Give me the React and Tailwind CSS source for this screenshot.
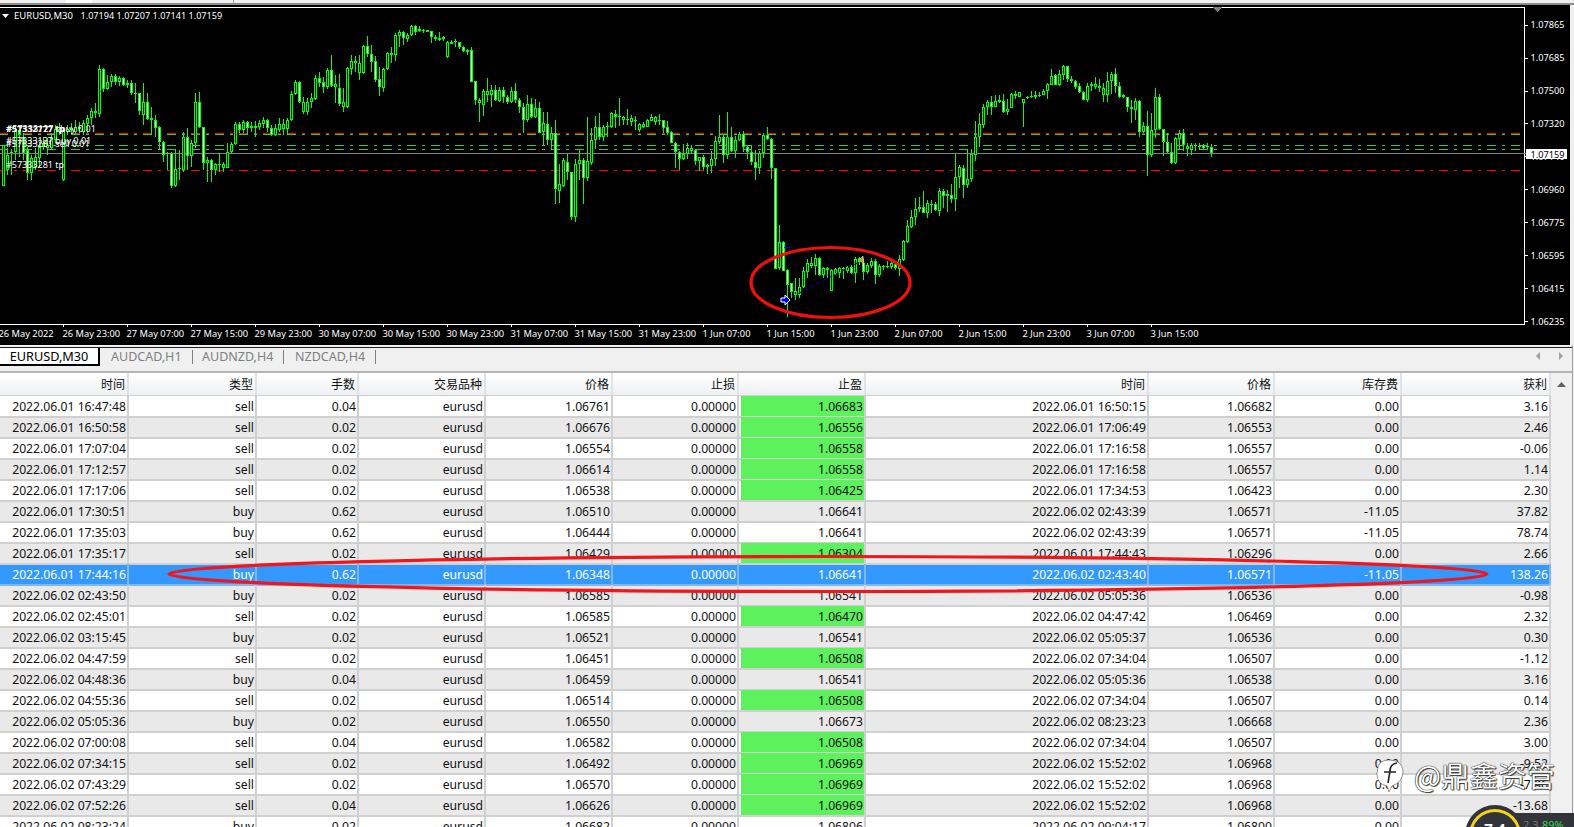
const COLS =
  "grid h-[21px] grid-cols-[129px_128px_102px_127px_127px_126px_127px_283px_126px_127px_149px]";

const HEADERS = ["时间", "类型", "手数", "交易品种", "价格", "止损", "止盈", "时间", "价格", "库存费", "获利"];

// open time, type, lots, open price, tp, tp hit, close time, close price, swap, profit
const TRADES = [
  ["2022.06.01 16:47:48", "sell", "0.04", "1.06761", "1.06683", 1, "2022.06.01 16:50:15", "1.06682", "0.00", "3.16"],
  ["2022.06.01 16:50:58", "sell", "0.02", "1.06676", "1.06556", 1, "2022.06.01 17:06:49", "1.06553", "0.00", "2.46"],
  ["2022.06.01 17:07:04", "sell", "0.02", "1.06554", "1.06558", 1, "2022.06.01 17:16:58", "1.06557", "0.00", "-0.06"],
  ["2022.06.01 17:12:57", "sell", "0.02", "1.06614", "1.06558", 1, "2022.06.01 17:16:58", "1.06557", "0.00", "1.14"],
  ["2022.06.01 17:17:06", "sell", "0.02", "1.06538", "1.06425", 1, "2022.06.01 17:34:53", "1.06423", "0.00", "2.30"],
  ["2022.06.01 17:30:51", "buy", "0.62", "1.06510", "1.06641", 0, "2022.06.02 02:43:39", "1.06571", "-11.05", "37.82"],
  ["2022.06.01 17:35:03", "buy", "0.62", "1.06444", "1.06641", 0, "2022.06.02 02:43:39", "1.06571", "-11.05", "78.74"],
  ["2022.06.01 17:35:17", "sell", "0.02", "1.06429", "1.06304", 1, "2022.06.01 17:44:43", "1.06296", "0.00", "2.66"],
  ["2022.06.01 17:44:16", "buy", "0.62", "1.06348", "1.06641", 0, "2022.06.02 02:43:40", "1.06571", "-11.05", "138.26"],
  ["2022.06.02 02:43:50", "buy", "0.02", "1.06585", "1.06541", 0, "2022.06.02 05:05:36", "1.06536", "0.00", "-0.98"],
  ["2022.06.02 02:45:01", "sell", "0.02", "1.06585", "1.06470", 1, "2022.06.02 04:47:42", "1.06469", "0.00", "2.32"],
  ["2022.06.02 03:15:45", "buy", "0.02", "1.06521", "1.06541", 0, "2022.06.02 05:05:37", "1.06536", "0.00", "0.30"],
  ["2022.06.02 04:47:59", "sell", "0.02", "1.06451", "1.06508", 1, "2022.06.02 07:34:04", "1.06507", "0.00", "-1.12"],
  ["2022.06.02 04:48:36", "buy", "0.04", "1.06459", "1.06541", 0, "2022.06.02 05:05:36", "1.06538", "0.00", "3.16"],
  ["2022.06.02 04:55:36", "sell", "0.02", "1.06514", "1.06508", 1, "2022.06.02 07:34:04", "1.06507", "0.00", "0.14"],
  ["2022.06.02 05:05:36", "buy", "0.02", "1.06550", "1.06673", 0, "2022.06.02 08:23:23", "1.06668", "0.00", "2.36"],
  ["2022.06.02 07:00:08", "sell", "0.04", "1.06582", "1.06508", 1, "2022.06.02 07:34:04", "1.06507", "0.00", "3.00"],
  ["2022.06.02 07:34:15", "sell", "0.02", "1.06492", "1.06969", 1, "2022.06.02 15:52:02", "1.06968", "0.00", "-9.52"],
  ["2022.06.02 07:43:29", "sell", "0.02", "1.06570", "1.06969", 1, "2022.06.02 15:52:02", "1.06968", "0.00", "-7.96"],
  ["2022.06.02 07:52:26", "sell", "0.04", "1.06626", "1.06969", 1, "2022.06.02 15:52:02", "1.06968", "0.00", "-13.68"],
  ["2022.06.02 08:23:24", "buy", "0.02", "1.06682", "1.06806", 0, "2022.06.02 09:04:17", "1.06800", "0.00", "2.36"],
];

const SELECTED_ROW = 8;

const PRICES = [
  ["1.07865", 24.7], ["1.07685", 57.6], ["1.07500", 90.5], ["1.07320", 123.4], ["1.07140", 156.3],
  ["1.06960", 189.2], ["1.06775", 222.2], ["1.06595", 255.1], ["1.06415", 288], ["1.06235", 321],
];

const TIMES = [
  "26 May 2022", "26 May 23:00", "27 May 07:00", "27 May 15:00", "29 May 23:00", "30 May 07:00", "30 May 15:00",
  "30 May 23:00", "31 May 07:00", "31 May 15:00", "31 May 23:00", "1 Jun 07:00", "1 Jun 15:00", "1 Jun 23:00",
  "2 Jun 07:00", "2 Jun 15:00", "2 Jun 23:00", "3 Jun 07:00", "3 Jun 15:00",
];

// candles read off the reference as [bodyTop, bodyBottom, wickTop, wickBottom, whiteBody]
// each block is in 3x crop units, see the offsets in CANDLES
const BLOCK_A = [
  [435,558,435,558],[465,510,445,525],[455,460,448,525],[390,455,375,480],[390,405,380,470,1],[410,460,400,480,1],
  [450,520,440,540,1],[475,518,465,540],[470,500,445,510],[440,475,425,500],[430,440,410,450],[435,445,415,465],
  [415,445,400,450],[388,420,375,430],[388,395,370,405],[390,540,385,542],[388,395,375,405],[385,390,370,400],
  [380,395,360,405],[382,388,365,400],[370,395,360,405],[355,372,345,400],[332,355,325,375],[332,340,310,355],
  [207,342,195,350],[207,268,205,275,1],[247,266,225,270],[227,247,222,260],[227,245,222,255,1],[235,245,228,258],
  [235,255,232,258,1],[250,255,240,265],[250,278,240,285,1],[278,283,250,310],[280,332,278,345,1],[307,345,250,375],
  [307,357,278,360,1],[355,361,320,405],[361,385,345,410,1],[381,425,378,450,1],[425,465,422,485,1],[460,462,455,510],
  [460,557,455,565,1],[508,557,450,562],[505,508,450,540],[412,510,395,515],[412,468,385,510,1],[430,468,420,500],
  [305,430,278,445],[305,382,275,385,1],[382,488,380,510,1],[480,488,470,545],[480,510,478,545,1],[492,510,488,525],
  [492,495,458,515],[492,503,485,515],[455,503,430,505],[433,457,425,460],[372,433,365,435],[372,390,365,400,1],
  [367,390,360,400],[367,383,362,405,1],[378,383,365,395],[378,385,362,412],[370,380,360,390],[360,372,350,385],
  [360,385,358,395,1],[385,405,375,408,1],[385,405,372,408],[373,390,355,395],[373,387,358,405],[360,387,355,405],
  [283,360,272,362],[245,283,240,285],[245,305,243,310,1],[305,335,290,342],[305,335,295,345],[293,305,280,325],
  [235,297,225,300],[235,248,215,260,1],[247,260,230,280,1],[210,262,205,268],[210,258,165,262,1],[253,262,225,308],
  [265,312,222,318,1],[307,320,265,335],[205,322,200,325],[183,206,165,225],[183,190,168,215],[190,218,165,240],
  [138,218,135,222],[138,163,108,170,1],[163,185,135,215,1],[183,240,168,245,1],[237,262,200,288,1],
];

const BLOCK_B = [
  [148,203,145,215],[100,148,97,150],[100,106,80,128],[46,106,38,122],[37,47,30,80],[37,55,32,75,1],[46,56,38,65],
  [18,46,15,48],[18,35,15,45,1],[28,32,18,36],[30,32,27,40],[31,35,30,36],[34,50,32,68,1],[50,58,45,62],[55,60,36,62],
  [52,57,47,62],[67,112,62,113],[67,71,60,72],[64,67,57,80],[67,82,65,88,1],[82,94,78,96,1],[90,95,86,106],
  [91,185,82,185,1],[184,241,184,254,1],[241,250,235,305],[214,254,208,287],[214,226,175,245],[211,226,195,260],
  [211,241,195,243,1],[211,242,202,245],[211,230,200,248,1],[230,245,225,252,1],[214,247,200,248],[214,240,190,248,1],
  [241,260,235,278,1],[260,300,250,338,1],[253,300,225,305],[253,290,235,295,1],[265,290,238,293],[265,340,247,340,1],
  [310,335,277,375],[313,361,277,375,1],[340,361,320,390],[340,508,300,552,1],[493,512,432,548],[421,497,415,500],
  [425,457,402,480,1],[457,590,455,600,1],[431,590,418,605],[420,431,390,480],[421,473,415,552,1],[424,473,292,483],
  [361,428,325,435],[320,360,288,387],[320,352,280,360,1],[320,352,315,362],[318,320,305,350],[280,320,276,325],
  [283,290,270,324,1],[288,290,235,318],[290,299,288,315],[296,299,267,315],[295,305,285,317],[301,304,287,330],
  [313,330,310,335],[313,320,305,325],[301,320,298,322],[290,302,282,303],[290,305,288,315],[301,304,282,315],
  [301,323,300,340,1],[320,338,303,345,1],[337,368,334,370,1],[368,395,366,445,1],[395,416,393,450,1],[401,416,372,420],
  [385,401,370,418],[385,393,375,398],[390,422,388,435,1],[412,422,410,452],[412,440,405,450,1],[435,440,432,462],
  [416,437,392,458],[364,418,348,438],[352,365,285,372],[352,406,345,430,1],[350,406,277,417],[350,392,321,395,1],
  [361,392,348,415],[343,361,335,362],[343,380,333,395,1],[380,395,376,417,1],[395,425,378,435,1],[425,443,390,480,1],
  [400,443,392,462],[346,400,338,415],[346,356,322,360,1],[358,445,355,478,1],
];

const BLOCK_C = [
  [-6,298,-6,298,1],[215,295,165,300],[215,302,213,302,1],[300,345,298,440,1],[340,367,338,385,1],[364,375,325,390],
  [352,375,325,385],[304,352,292,355],[280,305,268,325],[280,288,260,295],[265,287,252,315],[264,315,262,318,1],
  [294,316,290,325],[294,300,290,325],[300,362,298,362],[298,312,295,315],[294,308,290,325],[294,297,290,328],
  [290,303,288,310],[290,308,285,312,1],[267,310,262,340],[263,275,262,285],[278,305,268,330,1],[285,305,280,312],
  [274,288,265,293],[274,315,268,342,1],[288,315,282,322],[288,290,285,300],[288,290,272,295],[278,292,270,298],
  [282,295,275,300,1],[268,296,255,318],[213,270,210,272],[168,215,150,218],[141,170,120,175],[118,141,85,165],
];

const BLOCK_D = [
  [472,476,442,485],[472,488,423,490,1],[460,488,450,505],[462,465,450,490],[463,480,455,482,1],[424,482,415,497],
  [424,437,418,474,1],[433,437,420,486],[436,446,402,458,1],[382,446,312,482],[352,382,345,415],[354,406,345,443,1],
  [388,405,298,415],[313,388,297,395],[260,314,213,332],[223,260,190,290],[172,224,162,233],[157,172,150,195],
  [157,170,138,195,1],[152,170,135,172],[151,155,135,158],[154,185,132,190,1],[176,185,148,195],[133,173,130,173],
  [133,138,124,148,1],[127,140,127,140],[146,160,146,230],[142,145,139,147],[139,142,124,143],[136,140,124,146],
  [136,138,125,140],[124,134,118,136],[103,124,100,148],[77,104,58,106],[74,104,72,106,1],[73,104,60,108],[49,74,44,90],
  [49,86,47,95,1],[86,92,78,100],[92,110,90,118,1],[107,125,100,128,1],[125,149,123,150,1],[107,149,100,156],
  [102,107,95,122],[103,110,82,118],[109,113,88,125],[115,134,100,155],[92,134,66,155],[73,92,65,132],[73,107,55,130,1],
  [107,140,95,145,1],[136,142,132,145],[142,172,140,185,1],[172,178,150,218],[154,179,145,210],[154,245,150,260,1],
  [229,245,217,250],[229,314,183,378,1],[241,314,190,320],[142,241,113,265],[142,238,132,240,1],[238,275,237,318,1],
  [275,305,250,308,1],[305,340,278,342,1],[265,338,262,342],[250,266,240,300],[250,285,237,302,1],[287,298,278,318],
  [286,299,280,315],[285,287,280,303],[287,292,280,296],[286,293,282,296,1],[288,290,280,296],[290,310,282,320,1],
];

const CANDLES = [
  ...BLOCK_A.map((c) => scale(c, 0)),
  ...BLOCK_B.map((c) => scale(c, 20)),
  ...BLOCK_C.map((c) => scale(c, 170)),
  ...BLOCK_D.map((c) => scale(c, 50)),
];

function scale(c, offset) {
  return {
    top: Math.round(offset + c[0] / 3),
    bottom: Math.round(offset + c[1] / 3),
    wickTop: Math.round(offset + c[2] / 3),
    wickBottom: Math.round(offset + c[3] / 3),
    white: c[4] === 1,
  };
}

function Candle({ c, x }) {
  return (
    <g>
      <rect x={x} y={c.wickTop} width="1" height={Math.max(c.wickBottom - c.wickTop, 1)} fill="#00ff00" />
      <rect x={x - 1} y={c.top} width="3" height={Math.max(c.bottom - c.top, 1)} fill="#00ff00" />
      {c.bottom - c.top > 2 && (
        <rect x={x} y={c.top + 1} width="1" height={c.bottom - c.top - 2} fill={c.white ? "#ffffff" : "#000000"} />
      )}
    </g>
  );
}

function OrderLine({ y, color }) {
  return (
    <line x1="0" x2="1520" y1={y + 0.5} y2={y + 0.5} stroke={color} strokeDasharray="9 6 3 6" strokeDashoffset="1" />
  );
}

function Chart() {
  return (
    <svg
      width="1570"
      height="340"
      viewBox="0 5 1570 340"
      shapeRendering="crispEdges"
      className="block shrink-0 bg-black"
    >
      <rect x="-1.5" y="7.5" width="1526" height="317" fill="none" stroke="#ffffff" />

      <line x1="0" x2="1527" y1="153.5" y2="153.5" stroke="#808080" />
      <OrderLine y={133} color="#ff0000" />
      <OrderLine y={134} color="#32cd32" />
      <OrderLine y={145} color="#32cd32" />
      <OrderLine y={149} color="#32cd32" />
      <OrderLine y={170} color="#ff0000" />

      {CANDLES.map((c, i) => (
        <Candle key={i} c={c} x={4 * i + 3} />
      ))}

      <g className="fill-white text-[9px]">
        <text x="6" y="131.5" className="font-bold">#57332777 tp</text>
        <text x="6.5" y="131.5">#57333127 tp</text>
        <text x="60" y="131.5">buy 0.01</text>
        <text x="6" y="144">#57333127 buy 0.01</text>
        <text x="6" y="146.5">#57333281 sell 0.01</text>
        <text x="6" y="167.5">#57333281 tp</text>
      </g>

      <polygon points="1213,7 1222,7 1217.5,12" fill="#808080" />

      {/* trade arrows */}
      <line x1="786" x2="861" y1="300" y2="261" stroke="#0000ff" strokeDasharray="3 4" shapeRendering="auto" />
      <rect x="784" y="247" width="7" height="1" fill="#0000ff" />
      <polygon
        points="781,298 785,298 785,295 790,300 785,305 785,302 781,302"
        fill="#0000ff"
        stroke="#ffffff"
        shapeRendering="auto"
      />
      <polygon points="859,260 863,256 864,264" fill="#c8963c" stroke="#ffffff" strokeWidth="0.5" shapeRendering="auto" />

      <ellipse cx="830.5" cy="282.5" rx="79.5" ry="35" fill="none" stroke="#f01010" strokeWidth="3.2" shapeRendering="auto" />

      {/* axes */}
      <polygon points="2,14 9,14 5.5,18" fill="#ffffff" shapeRendering="auto" />
      <g className="fill-white text-[9.5px]">
        <text x="14" y="19">EURUSD,M30</text>
      </g>
      <text x="80.5" y="19" className="fill-white text-[9.1px]">1.07194 1.07207 1.07141 1.07159</text>
      {PRICES.map(([label, y]) => (
        <g key={label}>
          <rect x="1525" y={Math.round(y)} width="3" height="1" fill="#ffffff" />
          <text x="1530.5" y={y + 3.5} className="fill-white text-[9.2px]">
            {label}
          </text>
        </g>
      ))}
      <rect x="1526" y="149" width="41" height="10" fill="#ffffff" />
      <text x="1530.5" y="157.5" className="fill-black text-[9.2px]">1.07159</text>
      {TIMES.map((label, i) => (
        <g key={label}>
          {i > 0 && <rect x={64 * i - 1} y="324" width="1" height="3" fill="#ffffff" />}
          <text x={64 * i - 1.5} y="337" className="fill-white text-[9.3px]">
            {label}
          </text>
        </g>
      ))}
    </svg>
  );
}

function TabBar() {
  return (
    <div className="h-[26px] shrink-0 pt-[2px]">
      <div className="flex h-full items-start border-t border-[#202020] text-[12.5px]">
        <div className="flex h-[18px] w-[100px] items-center justify-center border-r-2 border-b-2 border-black bg-white pt-[2px] text-[12.7px] text-black">
          EURUSD,M30
        </div>
        <div className="mt-[2px] flex h-[14px] w-[93px] items-center border-r border-[#808080] pl-[11px] pt-px text-[#808080]">
          AUDCAD,H1
        </div>
        <div className="mt-[2px] flex h-[14px] w-[91px] items-center border-r border-[#808080] pl-[9px] pt-px text-[#808080]">
          AUDNZD,H4
        </div>
        <div className="mt-[2px] flex h-[14px] w-[92px] items-center border-r border-[#808080] pl-[11px] pt-px text-[#808080]">
          NZDCAD,H4
        </div>
        <svg width="30" height="10" viewBox="0 0 30 10" className="ml-auto mr-[7px] mt-[3px]">
          <polygon points="5,1 5,9 1,5" fill="#a0a0a0" />
          <polygon points="24,1 24,9 28,5" fill="#a0a0a0" />
        </svg>
      </div>
    </div>
  );
}

function Cell({ children, selected, green }) {
  return (
    <div
      className={
        "flex items-stretch border-r-2 border-b-2 " + (selected ? "border-[#7fb6ee]" : "border-[#d0d0d0]")
      }
    >
      <div
        className={
          "flex w-full items-center justify-end pr-[1px] pt-[2px] " + (green ? "ml-[2px] bg-[#5df25d]" : "")
        }
      >
        {children}
      </div>
    </div>
  );
}

function TradeRow({ trade, index }) {
  const [open, type, lots, price, tp, tpHit, close, closePrice, swap, profit] = trade;
  const selected = index === SELECTED_ROW;
  const bg = selected ? "bg-[#3399ff] text-white" : index % 2 === 1 ? "bg-[#e9e9e9] text-[#111]" : "bg-white text-[#111]";

  return (
    <div className={COLS + " " + bg}>
      <Cell selected={selected}>{open}</Cell>
      <Cell selected={selected}>{type}</Cell>
      <Cell selected={selected}>{lots}</Cell>
      <Cell selected={selected}>eurusd</Cell>
      <Cell selected={selected}>{price}</Cell>
      <Cell selected={selected}>0.00000</Cell>
      <Cell selected={selected} green={tpHit === 1}>{tp}</Cell>
      <Cell selected={selected}>{close}</Cell>
      <Cell selected={selected}>{closePrice}</Cell>
      <Cell selected={selected}>{swap}</Cell>
      <Cell selected={selected}>{profit}</Cell>
    </div>
  );
}

function TradeTable() {
  return (
    <div className="flex flex-1 flex-col overflow-hidden">
      <div className="flex border-t-2 border-[#b4b4b4]">
        <div className={COLS + " !h-[23px] w-[1551px] border-b border-[#d0d0d0] bg-gradient-to-b from-white to-[#eef0f3]"}>
          {HEADERS.map((h, i) => (
            <div
              key={i}
              className="flex items-center justify-end border-r-2 border-[#e0e2e6] pr-[2px] font-['Noto_Sans_CJK_SC','Noto_Sans',sans-serif] text-[12px] text-[#111]"
            >
              {h}
            </div>
          ))}
        </div>
        <div className="flex flex-1 items-center justify-center">
          <svg width="9" height="5" viewBox="0 0 9 5">
            <polygon points="0,5 9,5 4.5,0" fill="#606060" />
          </svg>
        </div>
      </div>
      <div className="flex">
        <div className="w-[1551px] text-[12.2px]">
          {TRADES.map((t, i) => (
            <TradeRow key={t[0]} trade={t} index={i} />
          ))}
        </div>
      </div>
    </div>
  );
}

function Watermark() {
  return (
    <div className="absolute left-[1375px] top-[757px] flex items-center gap-[9px] font-['Noto_Sans_CJK_SC',sans-serif] text-[28.5px] leading-[36px] text-white [text-shadow:0_0_1px_#000,0_0_1px_#000,1px_1px_1px_#444]">
      <svg width="30" height="36" viewBox="0 0 30 36">
        <path d="M3 10 Q5 3 14 3 Q27 3 28 14 Q28 25 17 29 L14 35 L12 29 Q2 27 2 17 Z" fill="#ffffff" stroke="#555" strokeWidth="0.6" />
        <path d="M22 6 Q15 7 15 14 L13 26 M9 15 L21 15" fill="none" stroke="#222" strokeWidth="1.6" />
      </svg>
      <span>@鼎鑫资管</span>
    </div>
  );
}

function SpeedWidget() {
  return (
    <>
      <div className="absolute left-[1495px] top-[813px] h-[14px] w-[79px] bg-[#33343a]">
        <span className="absolute left-[28px] top-[5px] text-[11px] leading-[14px] text-[#777]">2.3</span>
        <span className="absolute left-[47px] top-[5px] text-[11px] leading-[14px] text-[#39d353]">89%</span>
      </div>
      <div className="absolute left-[1465px] top-[805px] flex h-[60px] w-[60px] items-center justify-center rounded-full bg-[#33343a]">
        <div className="flex h-[52px] w-[52px] items-start justify-center rounded-full border-[3px] border-[#f2d21b] pt-[5px] text-[15px] font-bold text-white">
          7.4
        </div>
      </div>
    </>
  );
}

export default function App() {
  return (
    <div className="relative flex h-[827px] w-[1574px] flex-col overflow-hidden bg-[#f0f0f0] font-['Noto_Sans',sans-serif]">
      <div className="flex h-[3px] shrink-0">
        <div className="ml-[66px] w-[26px] bg-white" />
        <div className="ml-[141px] w-px bg-[#a0a0a0]" />
      </div>
      <div className="h-[2px] shrink-0 bg-[#8c8c8c]" />
      <div className="flex h-[340px] shrink-0">
        <Chart />
      </div>
      <div className="flex w-[1573px] flex-1 flex-col overflow-hidden border-r border-[#a0a0a0]">
        <TabBar />
        <TradeTable />
      </div>

      {/* red ring drawn over the selected row */}
      <svg width="1574" height="827" className="pointer-events-none absolute left-0 top-0">
        <ellipse cx="828" cy="574" rx="659" ry="17.5" fill="none" stroke="#f5141a" strokeWidth="3.2" />
      </svg>

      <Watermark />
      <SpeedWidget />
    </div>
  );
}
